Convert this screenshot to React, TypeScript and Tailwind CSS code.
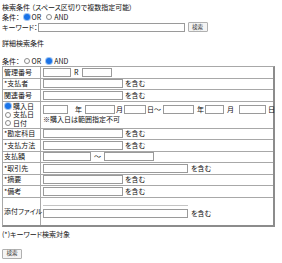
import React from "react";

const F = { fontFamily: '"Noto Sans CJK JP", "Noto Sans", sans-serif' };

function Radio({ on }: { on?: boolean }) {
  return on ? (
    <span className="inline-block w-[6px] h-[6px] rounded-full bg-[#1a73e8] ring-1 ring-[#9cc2f2] mx-[2px] shrink-0" />
  ) : (
    <span className="inline-block w-[6px] h-[6px] rounded-full border border-[#8a8a8a] bg-white mx-[2px] shrink-0" />
  );
}

function Inp({ w }: { w: number }) {
  return <span className="inline-block h-[9px] border border-[#9a9a9a] bg-white shrink-0" style={{ width: w }} />;
}

function Row({ label, children }: { label: React.ReactNode; children: React.ReactNode }) {
  return (
    <div className="flex h-[11.5px] border-b border-[#a8a8a8]">
      <div className="w-[38px] shrink-0 border-r border-[#a8a8a8] flex items-center pl-[1px] whitespace-nowrap">{label}</div>
      <div className="flex-1 flex items-center pl-[2px]">{children}</div>
    </div>
  );
}

function Btn() {
  return (
    <span className="h-[10px] w-[20px] border border-[#b0b0b0] bg-[#f4f4f4] text-[5.5px] flex items-center justify-center rounded-[1px] text-[#333]">検索</span>
  );
}

export default function App() {
  return (
    <div
      className="w-[282px] h-[263px] bg-white text-[7px] leading-[9px] text-[#111] px-[2px] pt-[2px] [font-feature-settings:'palt']"
      style={F}
    >
      <div className="h-[10px] flex items-center whitespace-nowrap">検索条件 （スペース区切りで複数指定可能）</div>
      <div className="h-[10px] flex items-center">
        条件：<span className="w-[2px]" />
        <Radio on />OR<span className="w-[3px]" />
        <Radio />AND
      </div>
      <div className="h-[10px] flex items-center">
        キーワード：<Inp w={147} />
        <span className="ml-[3px]">
          <Btn />
        </span>
      </div>
      <div className="h-[10px] mt-[6px] flex items-center">詳細検索条件</div>
      <div className="h-[10px] mt-[8px] flex items-center">
        条件：<span className="w-[2px]" />
        <Radio />OR<span className="w-[3px]" />
        <Radio on />AND
      </div>
      <div className="w-[273px] border border-[#a8a8a8] border-r-[2px] border-r-[#8c8c8c] border-b-[2px] border-b-[#8c8c8c]">
        <Row label="管理番号">
          <Inp w={28} />
          <span className="ml-[3px] mr-[4px]">R</span>
          <Inp w={30} />
        </Row>
        <Row label="*支払者">
          <Inp w={80} />
          <span className="ml-[2px]">を含む</span>
        </Row>
        <Row label="関連番号">
          <Inp w={80} />
          <span className="ml-[2px]">を含む</span>
        </Row>
        <div className="flex h-[27px] border-b border-[#a8a8a8]">
          <div className="w-[38px] shrink-0 border-r border-[#a8a8a8] flex flex-col justify-center">
            <div className="h-[8.5px] flex items-center"><Radio on />購入日</div>
            <div className="h-[8.5px] flex items-center"><Radio />支払日</div>
            <div className="h-[8.5px] flex items-center"><Radio />日付</div>
          </div>
          <div className="flex-1 pl-[2px] pt-[3px]">
            <div className="flex items-center h-[10px] whitespace-nowrap">
              <Inp w={25} />
              <span className="ml-[7px] mr-[3px]">年</span>
              <Inp w={30} />
              <span className="mx-[1px]">月</span>
              <Inp w={22} />
              <span className="ml-[1px] mr-[2px]">日～</span>
              <Inp w={31} />
              <span className="ml-[3px] mr-[1px]">年</span>
              <Inp w={19} />
              <span className="ml-[3px] mr-[5px]">月</span>
              <Inp w={27} />
              <span className="ml-[2px]">日</span>
            </div>
            <div className="h-[10px] flex items-center whitespace-nowrap">※購入日は範囲指定不可</div>
          </div>
        </div>
        <Row label="*勘定科目">
          <Inp w={80} />
          <span className="ml-[2px]">を含む</span>
        </Row>
        <Row label="*支払方法">
          <Inp w={80} />
          <span className="ml-[2px]">を含む</span>
        </Row>
        <Row label="支払額">
          <Inp w={48} />
          <span className="mx-[3px]">～</span>
          <Inp w={50} />
        </Row>
        <Row label="*取引先">
          <Inp w={145} />
          <span className="ml-[3px]">を含む</span>
        </Row>
        <Row label="*摘要">
          <Inp w={80} />
          <span className="ml-[2px]">を含む</span>
        </Row>
        <Row label="*備考">
          <Inp w={80} />
          <span className="ml-[2px]">を含む</span>
        </Row>
        <div className="flex h-[27px]">
          <div className="w-[38px] shrink-0 border-r border-[#a8a8a8] flex items-center whitespace-nowrap pl-[1px]">添付ファイル</div>
          <div className="flex-1 pl-[2px] flex flex-col justify-center">
            <div className="w-[145px] h-0 border-t border-[#c4c4c4]" />
            <div className="flex items-center mt-[3px]">
              <Inp w={145} />
              <span className="ml-[3px]">を含む</span>
            </div>
          </div>
        </div>
      </div>
      <div className="mt-[3px] h-[10px] flex items-center">(*)キーワード検索対象</div>
      <div className="mt-[9px]">
        <Btn />
      </div>
    </div>
  );
}
